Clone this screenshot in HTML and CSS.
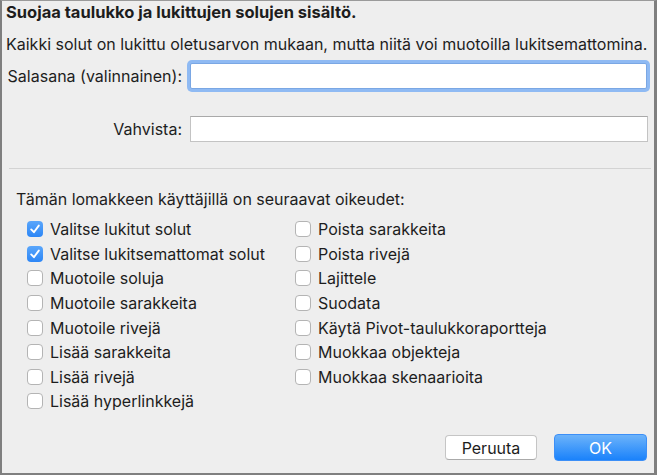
FILE: index.html
```html
<!DOCTYPE html>
<html lang="fi">
<head>
<meta charset="utf-8">
<link rel="stylesheet" href="styles.css">
</head>
<body>
<div class="dialog">
  <div class="title">Suojaa taulukko ja lukittujen solujen sisältö.</div>
  <div class="intro">Kaikki solut on lukittu oletusarvon mukaan, mutta niitä voi muotoilla lukitsemattomina.</div>
  <div class="field field-pw">
    <label class="flabel">Salasana (valinnainen):</label>
    <div class="input focused"></div>
  </div>
  <div class="field field-confirm">
    <label class="flabel">Vahvista:</label>
    <div class="input"></div>
  </div>
  <div class="sep"></div>
  <div class="perm-title">Tämän lomakkeen käyttäjillä on seuraavat oikeudet:</div>
  <div class="grid">
    <div class="col">
      <div class="cb"><span class="box checked"><svg viewBox="0 0 16 16" width="16" height="16"><path d="M4.2 8.4 L6.9 11.2 L11.8 4.6" fill="none" stroke="#fff" stroke-width="1.9" stroke-linecap="round" stroke-linejoin="round"/></svg></span>Valitse lukitut solut</div>
      <div class="cb"><span class="box checked"><svg viewBox="0 0 16 16" width="16" height="16"><path d="M4.2 8.4 L6.9 11.2 L11.8 4.6" fill="none" stroke="#fff" stroke-width="1.9" stroke-linecap="round" stroke-linejoin="round"/></svg></span>Valitse lukitsemattomat solut</div>
      <div class="cb"><span class="box"></span>Muotoile soluja</div>
      <div class="cb"><span class="box"></span>Muotoile sarakkeita</div>
      <div class="cb"><span class="box"></span>Muotoile rivejä</div>
      <div class="cb"><span class="box"></span>Lisää sarakkeita</div>
      <div class="cb"><span class="box"></span>Lisää rivejä</div>
      <div class="cb"><span class="box"></span>Lisää hyperlinkkejä</div>
    </div>
    <div class="col">
      <div class="cb"><span class="box"></span>Poista sarakkeita</div>
      <div class="cb"><span class="box"></span>Poista rivejä</div>
      <div class="cb"><span class="box"></span>Lajittele</div>
      <div class="cb"><span class="box"></span>Suodata</div>
      <div class="cb"><span class="box"></span>Käytä Pivot-taulukkoraportteja</div>
      <div class="cb"><span class="box"></span>Muokkaa objekteja</div>
      <div class="cb"><span class="box"></span>Muokkaa skenaarioita</div>
    </div>
  </div>
  <div class="buttons">
    <button class="btn">Peruuta</button>
    <button class="btn primary">OK</button>
  </div>
</div>
</body>
</html>
```
FILE: styles.css
```css
html, body {
  margin: 0;
  padding: 0;
  background: #ececec;
}
body {
  width: 657px;
  height: 475px;
  overflow: hidden;
  font-family: Inter, "Liberation Sans", Arial, sans-serif;
  font-size: 16px;
  color: #1d1d1d;
}
.dialog {
  box-sizing: border-box;
  width: 657px;
  height: 475px;
  background: #eeeeee;
  border-top: 1px solid #9a9a9a;
  border-left: 2px solid #7f7f7f;
  border-right: 3px solid #7f7f7f;
  border-bottom: 2px solid #7f7f7f;
  padding: 0 0 0 4px;
  display: flex;
  flex-direction: column;
  position: relative;
}
.title {
  font-weight: bold;
  font-size: 16.5px;
  margin-top: 2px;
  line-height: 18px;
}
.intro {
  margin-top: 14px;
  line-height: 18px;
}
.field {
  display: flex;
  align-items: center;
  height: 26px;
}
.flabel {
  width: 176px;
  text-align: right;
  flex: none;
}
.field-pw {
  margin-top: 10px;
}
.field-confirm {
  margin-top: 27px;
}
.input {
  box-sizing: border-box;
  background: #fff;
  margin-left: 8px;
  width: 457px;
  height: 26px;
  border: 1px solid #c3c3c3;
  border-top-color: #a9a9a9;
}
.focused {
  border: 1px solid #7aa7e4;
  box-shadow: 0 0 0 3px #8fbaf3;
  border-radius: 2px;
}
.field-confirm .input {
  margin-left: 8px;
  width: 458px;
}
.sep {
  height: 1px;
  background: #d3d3d3;
  margin: 26px 3px 0 3px;
}
.perm-title {
  margin-top: 21px;
  margin-left: 10px;
  line-height: 18px;
}
.grid {
  display: flex;
  margin-top: 9px;
  margin-left: 21px;
}
.col {
  display: flex;
  flex-direction: column;
}
.col:first-child {
  width: 268px;
}
.cb {
  display: flex;
  align-items: center;
  height: 24.6px;
  white-space: nowrap;
}
.box {
  box-sizing: border-box;
  width: 16px;
  height: 16px;
  border: 1px solid #b4b4b4;
  border-radius: 4px;
  background: #fff;
  margin-right: 7px;
  flex: none;
  display: flex;
  align-items: center;
  justify-content: center;
}
.box.checked {
  border: none;
  background: linear-gradient(#5aa6fb, #2c86f6);
}
.buttons {
  position: absolute;
  right: 7px;
  bottom: 12px;
  display: flex;
  align-items: center;
  gap: 17px;
}
.btn {
  font-family: Inter, "Liberation Sans", Arial, sans-serif;
  font-size: 16px;
  color: #1d1d1d;
  box-sizing: border-box;
  width: 92px;
  height: 25px;
  background: #fff;
  border: 1px solid #c5c5c5;
  border-bottom-color: #aaa;
  border-radius: 4px;
  padding: 0;
}
.btn.primary {
  width: 93px;
  height: 27px;
  color: #fff;
  border: 1px solid #3c8ff7;
  background: linear-gradient(#6cb3fa, #1a82fb);
}
```
